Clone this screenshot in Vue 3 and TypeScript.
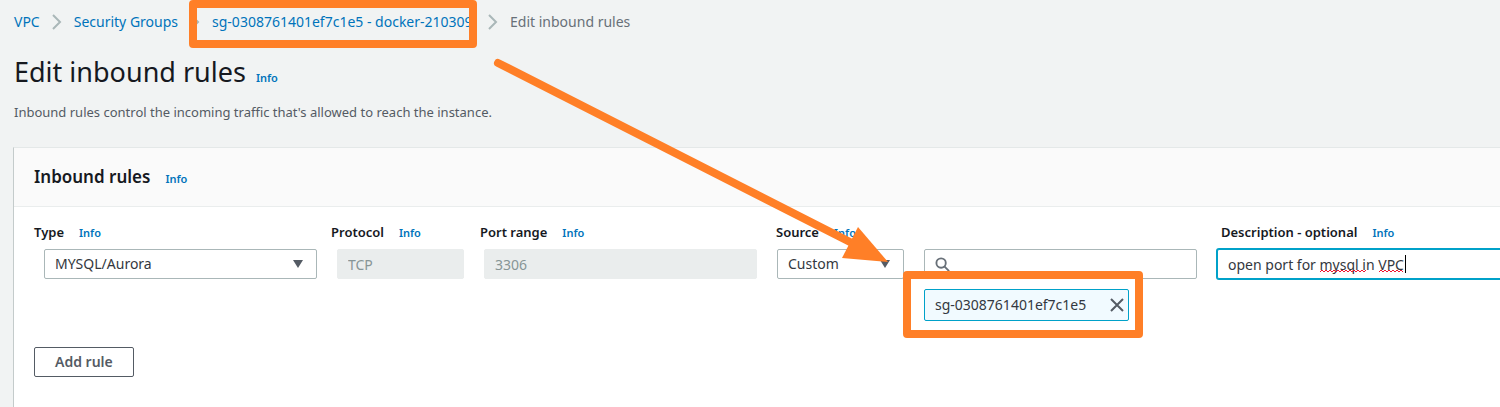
<script setup lang="ts">
import { ref } from 'vue'

interface Column {
  label: string
  target: string
}

const columns: Column[] = [
  { label: 'Type', target: 'type' },
  { label: 'Protocol', target: 'protocol' },
  { label: 'Port range', target: 'port' },
  { label: 'Source', target: 'source' },
  { label: 'Description - optional', target: 'description' },
]

const type = ref('MYSQL/Aurora')
const source = ref('Custom')
const search = ref('')
const description = ref('open port for mysql in VPC')
const groups = ref<string[]>(['sg-0308761401ef7c1e5'])

function removeGroup(id: string): void {
  groups.value = groups.value.filter((g) => g !== id)
}
</script>

<template>
  <div class="page">
    <nav class="crumbs" aria-label="Breadcrumbs">
      <a href="#">VPC</a>
      <svg class="chevron" viewBox="0 0 10 16"><path d="M1 1l7 7-7 7" /></svg>
      <a href="#">Security Groups</a>
      <svg class="chevron" viewBox="0 0 10 16"><path d="M1 1l7 7-7 7" /></svg>
      <a class="clipped" href="#">sg-0308761401ef7c1e5 - docker-210309</a>
      <svg class="chevron" viewBox="0 0 10 16"><path d="M1 1l7 7-7 7" /></svg>
      <span class="current">Edit inbound rules</span>
    </nav>

    <header class="heading">
      <h1>Edit inbound rules</h1>
      <a class="info" href="#">Info</a>
    </header>
    <p class="intro">Inbound rules control the incoming traffic that's allowed to reach the instance.</p>

    <section class="panel">
      <header class="panel-head">
        <h2>Inbound rules</h2>
        <a class="info" href="#">Info</a>
      </header>

      <div class="panel-body">
        <div class="labels">
          <div v-for="c in columns" :key="c.target" class="label-cell">
            <label :for="c.target">{{ c.label }}</label>
            <a class="info" href="#">Info</a>
          </div>
        </div>

        <div class="fields">
          <div class="control">
            <select id="type" v-model="type"><option>MYSQL/Aurora</option></select>
            <svg class="caret-down" viewBox="0 0 10 8"><path d="M0 0h10L5 8z" /></svg>
          </div>
          <div class="control"><input id="protocol" value="TCP" disabled /></div>
          <div class="control"><input id="port" value="3306" disabled /></div>
          <div class="control">
            <select id="source" v-model="source"><option>Custom</option></select>
            <svg class="caret-down" viewBox="0 0 10 8"><path d="M0 0h10L5 8z" /></svg>
          </div>
          <div class="stack">
            <div class="control">
              <input id="search" v-model="search" class="search" aria-label="Search sources" />
              <svg class="lens" viewBox="0 0 16 16">
                <circle cx="6.5" cy="6.5" r="5" /><path d="M10 10l5 5" />
              </svg>
            </div>
            <div v-for="g in groups" :key="g" class="token">
              <span>{{ g }}</span>
              <button type="button" :aria-label="'Remove ' + g" @click="removeGroup(g)">
                <svg viewBox="0 0 14 14"><path d="M1 1l12 12M13 1L1 13" /></svg>
              </button>
            </div>
          </div>
          <div class="control">
            <input id="description" v-model="description" class="active" spellcheck="false" />
            <svg class="marks" viewBox="0 0 184 20">
              <path class="wave" d="M92 17l2-2 2 2 2-2 2 2 2-2 2 2 2-2 2 2 2-2 2 2 2-2 2 2 2-2 2 2 2-2 2 2 2-2 2 2 2-2 2 2 2-2 2 2 2-2" />
              <path class="wave" d="M151 17l2-2 2 2 2-2 2 2 2-2 2 2 2-2 2 2 2-2 2 2 2-2 2 2" />
              <path class="beam" d="M177.5 0v18" />
            </svg>
          </div>
        </div>

        <button class="add" type="button">Add rule</button>
      </div>
    </section>

    <svg class="annotations" width="1150" height="345" viewBox="0 0 1150 345" aria-hidden="true">
      <rect x="193" y="4" width="280" height="40" />
      <rect x="907" y="275" width="232" height="59" />
      <path d="M498 63L852 243" />
      <path class="head" d="M888 262L858 227L842 258z" />
    </svg>
  </div>
</template>

<style>
body {
  margin: 0;
  background: #f1f3f3;
}
</style>

<style scoped>
.page {
  position: relative;
  box-sizing: border-box;
  display: flex;
  flex-direction: column;
  min-height: 100vh;
  padding: 12px 0 0 13px;
  overflow: hidden;
  background: #f1f3f3;
  color: #16191f;
  font-family: "Noto Sans", "Open Sans", sans-serif;
  font-size: 13px;
  line-height: 20px;
}

a {
  color: #0073bb;
  text-decoration: none;
}

.crumbs {
  display: flex;
  align-items: center;
  gap: 12px;
  padding-left: 1px;
  font-size: 14px;
  white-space: nowrap;
}

.clipped {
  width: 264px;
  overflow: hidden;
}

.current {
  color: #687078;
}

.chevron {
  flex: none;
  width: 10px;
  height: 16px;
  fill: none;
  stroke: #aab7b8;
  stroke-width: 2;
}

.heading {
  display: flex;
  align-items: baseline;
  gap: 10px;
  margin-top: 22px;
  padding-left: 1px;
}

h1 {
  margin: 0;
  font-size: 27px;
  font-weight: 400;
  line-height: 36px;
}

.info {
  font-size: 11px;
  font-weight: 600;
}

.intro {
  margin: 12px 0 25px;
  padding-left: 1px;
  color: #545b64;
}

.panel {
  flex: 1;
  border-top: 1px solid #e4e8e8;
  border-left: 1px solid #c4cbcb;
  background: #fff;
}

.panel-head {
  display: flex;
  align-items: baseline;
  gap: 15px;
  padding: 17px 20px;
  border-bottom: 1px solid #eaeded;
  background: #fafafa;
}

h2 {
  margin: 0;
  font-size: 17px;
  font-weight: 600;
  line-height: 24px;
}

.panel-body {
  padding: 15px 0 30px 20px;
}

.labels {
  display: grid;
  grid-template-columns: 297fr 149fr 296fr 445fr 279fr;
}

.label-cell {
  display: flex;
  align-items: baseline;
  gap: 15px;
  min-width: 0;
  font-weight: 600;
  white-space: nowrap;
}

.fields {
  display: grid;
  grid-template-columns:
    minmax(0, 273fr) minmax(0, 127fr) minmax(0, 273fr) minmax(0, 127fr)
    minmax(0, 273fr) minmax(0, 283fr);
  align-items: start;
  gap: 20px;
  margin-top: 6px;
  padding-left: 10px;
  font-size: 14px;
}

.control {
  position: relative;
}

input,
select {
  display: block;
  box-sizing: border-box;
  width: 100%;
  height: 30px;
  margin: 0;
  padding: 0 10px;
  border: 1px solid #aab7b8;
  border-radius: 2px;
  outline: 0;
  appearance: none;
  background: #fff;
  color: #333840;
  font: inherit;
}

input:disabled {
  border-color: #eaeded;
  background: #eaeded;
  color: #879596;
}

.search {
  padding-left: 32px;
}

.active {
  border-color: #00a1c9;
  border-right: 0;
  border-radius: 2px 0 0 2px;
  box-shadow: 0 0 0 1px #00a1c9;
}

.caret-down {
  position: absolute;
  top: 11px;
  right: 14px;
  width: 10px;
  height: 8px;
  fill: #545b64;
  pointer-events: none;
}

.lens {
  position: absolute;
  top: 8px;
  left: 11px;
  width: 15px;
  height: 15px;
  fill: none;
  stroke: #687078;
  stroke-width: 2;
  pointer-events: none;
}

.marks {
  position: absolute;
  top: 6px;
  left: 11px;
  width: 184px;
  height: 20px;
  fill: none;
  pointer-events: none;
}

.wave {
  stroke: #f0142f;
  stroke-width: 1;
}

.beam {
  stroke: #000;
  stroke-width: 1;
}

.stack {
  display: grid;
  justify-items: start;
  gap: 10px;
}

.stack .control {
  width: 100%;
}

.token {
  display: flex;
  box-sizing: border-box;
  align-items: center;
  justify-content: space-between;
  width: 75%;
  height: 32px;
  padding: 0 4px 0 10px;
  border: 1px solid #00a1c9;
  border-radius: 2px;
  background: #f1faff;
  color: #333840;
}

.token button {
  display: flex;
  padding: 0;
  border: 0;
  background: none;
}

.token svg {
  width: 14px;
  height: 14px;
  fill: none;
  stroke: #545b64;
  stroke-width: 2;
}

.add {
  height: 30px;
  margin-top: 26px;
  padding: 0 20px;
  border: 1px solid #545b64;
  border-radius: 2px;
  background: #fff;
  color: #545b64;
  font: inherit;
  font-size: 14px;
  font-weight: 600;
}

.annotations {
  position: absolute;
  top: 0;
  left: 0;
  fill: none;
  stroke: #ff7f27;
  stroke-width: 8;
  stroke-linecap: round;
  stroke-linejoin: round;
  pointer-events: none;
}

.annotations .head {
  fill: #ff7f27;
  stroke: none;
}
</style>
